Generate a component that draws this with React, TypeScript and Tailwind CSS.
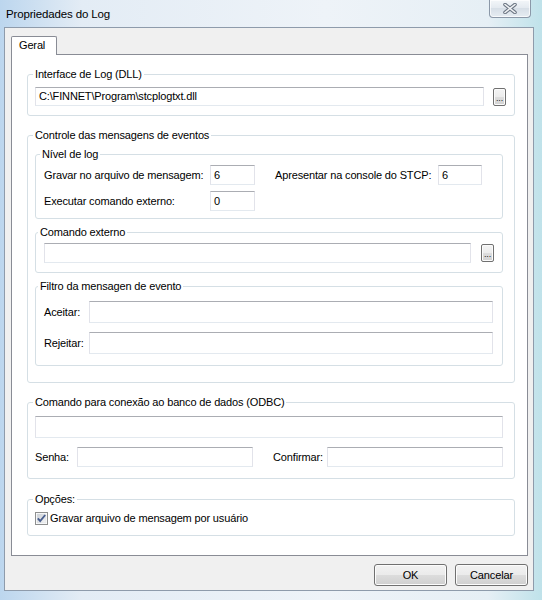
import React from 'react';

const TextBox: React.FC<{ value?: string; className?: string }> = ({ value = '', className = '' }) => (
    <div
        className={`bg-white border border-[#e2e3ea] border-t-[#abadb3] border-b-[#e3e9ef] pl-[3px] flex items-center text-black whitespace-nowrap overflow-hidden ${className}`}
    >
        {value}
    </div>
);

const DotsButton: React.FC = () => (
    <div className="w-[13px] h-[18px] shrink-0 rounded-[2px] border border-[#707070] bg-[linear-gradient(#f4f4f4,#ececec_50%,#dedede_50%,#d2d2d2)] shadow-[inset_0_0_0_1px_#fbfbfb] flex items-end justify-center text-[9px] leading-[9px] pb-[2px] text-[#222]">
        ...
    </div>
);

const Group: React.FC<{
    title: string;
    className?: string;
    legendClass?: string;
    children: React.ReactNode;
}> = ({ title, className = '', legendClass = '-ml-[2px]', children }) => (
    <fieldset className={`border border-[#d5dfe5] rounded-[3px] ${className}`}>
        <legend className={`px-[2px] leading-[14px] text-black ${legendClass}`}>{title}</legend>
        {children}
    </fieldset>
);

const WinButton: React.FC<{ label: string }> = ({ label }) => (
    <button
        type="button"
        className="w-[73px] h-[22px] rounded-[3px] border border-[#707070] bg-[linear-gradient(#f2f2f2,#ebebeb_50%,#dddddd_50%,#cfcfcf)] shadow-[inset_0_0_0_1px_#fcfcfc] text-black leading-[20px]"
    >
        {label}
    </button>
);

const CheckBox: React.FC = () => (
    <svg width="13" height="13" viewBox="0 0 13 13" className="shrink-0">
        <defs>
            <linearGradient id="cbg" x1="0" y1="0" x2="1" y2="1">
                <stop offset="0" stopColor="#cbcfd5" />
                <stop offset="1" stopColor="#f6f6f6" />
            </linearGradient>
        </defs>
        <rect x="0.5" y="0.5" width="12" height="12" fill="#fff" stroke="#8e8f8f" />
        <rect x="2" y="2" width="9" height="9" fill="url(#cbg)" stroke="#d7dadd" strokeWidth="0.5" />
        <path d="M2.8 6.3 L5.2 9 L10.2 3" fill="none" stroke="#4a5f8f" strokeWidth="1.9" />
    </svg>
);

export default function App() {
    return (
        <div className="w-[542px] h-[600px] flex flex-col bg-[linear-gradient(to_right,#bcd6ee,#e3ecf5_15%,#eef3f8_60%,#e6eff5_90%,#bfe2ea)] font-['Liberation_Sans',Arial,sans-serif] text-[11px] tracking-[-0.15px] text-black overflow-hidden">
            {/* title bar */}
            <div className="h-[27px] shrink-0 flex items-start justify-between">
                <div className="pl-[6px] pt-[7px] leading-[14px] text-[11.5px]">Propriedades do Log</div>
                <div className="mr-[11px] w-[42px] h-[18px] rounded-b-[4px] border border-t-0 border-[#8b98a8] bg-[linear-gradient(#f3f6f9,#e3e9ef_50%,#d7dfe7_50%,#e6ecf2)] shadow-[inset_0_0_0_1px_rgba(255,255,255,0.7)] flex items-center justify-center">
                    <svg width="14" height="11" viewBox="0 0 14 11">
                        <path d="M2 1.5 L12 9.5 M12 1.5 L2 9.5" stroke="#6d7784" strokeWidth="3.6" strokeLinecap="round" />
                        <path d="M2 1.5 L12 9.5 M12 1.5 L2 9.5" stroke="#f2f4f6" strokeWidth="1.6" strokeLinecap="round" />
                    </svg>
                </div>
            </div>

            {/* window body */}
            <div className="pl-[4px] pr-[8px] shrink-0">
                <div className="h-[564px] border border-[#8e9bab] bg-[#f0f0f0] pl-[6px] pr-[5px] pt-[8px] flex flex-col">
                    {/* tab header */}
                    <div className="flex">
                        <div className="relative z-10 -mb-[1px] h-[19px] w-[46px] bg-white border border-b-0 border-[#898c95] rounded-t-[2px] pl-[7px] leading-[17px]">
                            Geral
                        </div>
                    </div>

                    {/* tab panel */}
                    <div className="h-[502px] bg-white border border-[#898c95] pl-[15px] pr-[12px] pt-[12px] flex flex-col">
                        <Group title="Interface de Log (DLL)" className="pl-[7px] pr-[8px] pt-[6px] pb-[9px]">
                            <div className="flex items-center">
                                <TextBox value="C:\FINNET\Program\stcplogtxt.dll" className="flex-1 h-[19px]" />
                                <div className="ml-[9px]">
                                    <DotsButton />
                                </div>
                            </div>
                        </Group>

                        <Group title="Controle das mensagens de eventos" className="mt-[12px] pl-[7px] pr-[11px] pt-[5px] pb-[16px]">
                            <Group title="Nível de log" className="pl-[8px] pr-[8px] pt-[4px] pb-[7px]" legendClass="-ml-[4px]">
                                <div className="flex items-center h-[20px]">
                                    <div className="w-[166px]">Gravar no arquivo de mensagem:</div>
                                    <TextBox value="6" className="w-[45px] h-[20px]" />
                                    <div className="ml-[20px] w-[163px]">Apresentar na console do STCP:</div>
                                    <TextBox value="6" className="w-[44px] h-[20px]" />
                                </div>
                                <div className="flex items-center h-[20px] mt-[6px]">
                                    <div className="w-[166px]">Executar comando externo:</div>
                                    <TextBox value="0" className="w-[45px] h-[20px]" />
                                </div>
                            </Group>

                            <Group title="Comando externo" className="mt-[6px] pl-[8px] pr-[8px] pt-[4px] pb-[9px]" legendClass="-ml-[6px]">
                                <div className="flex items-center">
                                    <TextBox className="flex-1 h-[20px]" />
                                    <div className="ml-[10px]">
                                        <DotsButton />
                                    </div>
                                </div>
                            </Group>

                            <Group title="Filtro da mensagen de evento" className="mt-[6px] pl-[8px] pr-[9px] pt-[8px] pb-[11px]" legendClass="-ml-[6px]">
                                <div className="flex items-center">
                                    <div className="w-[45px]">Aceitar:</div>
                                    <TextBox className="flex-1 h-[22px]" />
                                </div>
                                <div className="flex items-center mt-[9px]">
                                    <div className="w-[45px]">Rejeitar:</div>
                                    <TextBox className="flex-1 h-[22px]" />
                                </div>
                            </Group>
                        </Group>

                        <Group title="Comando para conexão ao banco de dados (ODBC)" className="mt-[12px] pl-[7px] pr-[11px] pt-[7px] pb-[11px]">
                            <TextBox className="h-[22px]" />
                            <div className="flex items-center mt-[9px]">
                                <div className="w-[42px]">Senha:</div>
                                <TextBox className="w-[176px] h-[20px]" />
                                <div className="ml-[20px] w-[54px]">Confirmar:</div>
                                <TextBox className="flex-1 h-[20px]" />
                            </div>
                        </Group>

                        <Group title="Opções:" className="mt-[13px] pl-[7px] pr-[11px] pt-[6px] pb-[10px]">
                            <div className="flex items-center h-[13px] gap-[2px]">
                                <CheckBox />
                                <span>Gravar arquivo de mensagem por usuário</span>
                            </div>
                        </Group>
                    </div>

                    {/* dialog buttons */}
                    <div className="mt-[8px] flex justify-end gap-[8px]">
                        <WinButton label="OK" />
                        <WinButton label="Cancelar" />
                    </div>
                </div>
            </div>
            <div className="flex-1" />
        </div>
    );
}
